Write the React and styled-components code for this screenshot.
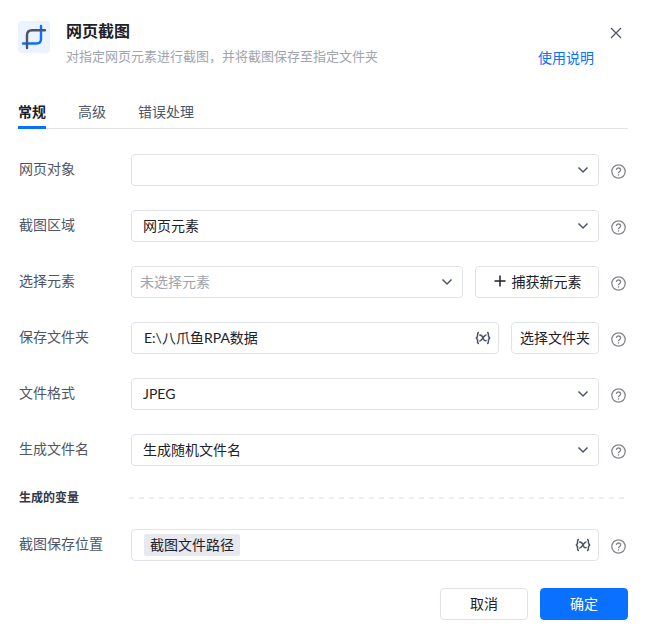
import React from "react";
import styled, { createGlobalStyle } from "styled-components";

const GlobalStyle = createGlobalStyle`
  * { box-sizing: border-box; }
  body {
    margin: 0;
    background: #ffffff;
    color: #1d2129;
  }
  body, button, input, select {
    font-family: Lato, "Noto Sans CJK SC", sans-serif;
    font-size: 14px;
  }
`;

const Dialog = styled.form`
  display: flex;
  flex-direction: column;
  padding: 20px 18px 18px;
`;

const Header = styled.header`
  display: flex;
  align-items: flex-start;
  gap: 16px;
`;

const AppIcon = styled.svg`
  flex: none;
  width: 32px;
  height: 32px;
  margin-top: 1px;
`;

const Heading = styled.div`
  flex: 1;
  min-width: 0;
`;

const Title = styled.h1`
  margin: 0;
  font-size: 16px;
  line-height: 22px;
  font-weight: 700;
`;

const Description = styled.p`
  margin: 3px 0 0;
  font-size: 13px;
  line-height: 22px;
  color: #a0a4ae;
`;

const HelpLink = styled.a`
  margin-top: 26px;
  line-height: 24px;
  color: #0a70ff;
  text-decoration: none;
`;

const CloseButton = styled.button`
  display: grid;
  place-items: center;
  width: 24px;
  height: 24px;
  margin-top: 1px;
  margin-left: -6px;
  padding: 0;
  border: 0;
  background: none;
  color: #4e5566;
`;

const TabList = styled.div`
  display: flex;
  gap: 32px;
  margin-top: 27px;
  border-bottom: 1px solid #e1e3ea;
`;

const Tab = styled.button`
  height: 32px;
  margin-bottom: -1px;
  padding: 1px 0 0;
  border: 0;
  border-bottom: 3px solid ${(p) => (p.$active ? "#0a70ff" : "transparent")};
  background: none;
  line-height: 28px;
  font-weight: ${(p) => (p.$active ? 700 : 400)};
  color: ${(p) => (p.$active ? "#1d2129" : "#4e5566")};
`;

const Fields = styled.div`
  display: flex;
  flex-direction: column;
  gap: 24px;
  padding-top: 25px;
`;

const Row = styled.div`
  display: grid;
  grid-template-columns: 100px minmax(0, 1fr) 17px;
  align-items: center;
  column-gap: 12px;
`;

const Label = styled.label`
  padding-left: 1px;
  line-height: 30px;
  align-self: start;
  color: #4e5566;
`;

const Controls = styled.div`
  display: flex;
  gap: 12px;
  padding-left: 1px;
`;

const Field = styled.div`
  display: grid;
  grid-template-columns: minmax(0, 1fr);
  align-items: center;
  flex: 1;
  min-width: 0;
  height: 32px;
  border: 1px solid #e1e3ea;
  border-radius: 4px;
  background: #ffffff;

  & > * { grid-row: 1; grid-column: 1; }
`;

const SelectBox = styled.select`
  appearance: none;
  width: 100%;
  height: 30px;
  padding: 0 32px 2px ${(p) => (p.$muted ? 8 : 11)}px;
  border: 0;
  border-radius: 4px;
  background: transparent;
  color: ${(p) => (p.$muted ? "#a0a4ae" : "#1d2129")};
`;

const TextBox = styled.input`
  width: 100%;
  height: 30px;
  padding: 0 32px 2px 12px;
  border: 0;
  border-radius: 4px;
  background: transparent;
  color: #1d2129;
`;

const Chevron = styled.svg`
  justify-self: end;
  width: 12px;
  height: 12px;
  margin-right: 9px;
  pointer-events: none;
`;

const VariableButton = styled.button`
  display: grid;
  place-items: center;
  justify-self: end;
  width: 16px;
  height: 16px;
  margin-right: 7px;
  padding: 0;
  border: 0;
  background: none;
  color: #4e5566;
`;

const Tag = styled.output`
  justify-self: start;
  margin-left: 12px;
  padding: 0 6px;
  border-radius: 2px;
  background: #e7e9ef;
  line-height: 22px;
`;

const Button = styled.button`
  display: flex;
  align-items: center;
  justify-content: center;
  gap: 5px;
  flex: none;
  width: ${(p) => (p.$wide ? 124 : 88)}px;
  height: 32px;
  padding: 0 0 2px;
  border: 1px solid ${(p) => (p.$primary ? "#0a70ff" : "#e1e3ea")};
  border-radius: 4px;
  background: ${(p) => (p.$primary ? "#0a70ff" : "#ffffff")};
  color: ${(p) => (p.$primary ? "#ffffff" : "#1d2129")};
`;

const HelpButton = styled.button`
  display: grid;
  place-items: center;
  width: 15px;
  height: 15px;
  margin-top: 3px;
  padding: 0;
  border: 0;
  background: none;
  color: #85878c;
`;

const Section = styled.div`
  display: grid;
  grid-template-columns: 99px minmax(0, 1fr);
  column-gap: 12px;
  align-items: center;
  padding: 22px 4px 21px 0;
`;

const SectionTitle = styled.h2`
  margin: 0;
  padding-left: 1px;
  font-size: 12px;
  line-height: 20px;
  font-weight: 700;
  color: #333844;
`;

const DashedLine = styled.div`
  height: 2px;
  background: repeating-linear-gradient(to right, #eceef2 0 5px, transparent 5px 10px);
`;

const Footer = styled.footer`
  display: flex;
  justify-content: flex-end;
  gap: 12px;
  padding-top: 27px;
`;

function Help() {
  return (
    <HelpButton type="button" aria-label="帮助">
      <svg width="15" height="15" viewBox="0 0 15 15" fill="none" stroke="currentColor" strokeWidth="1.3">
        <circle cx="7.5" cy="7.5" r="6.7" />
        <path d="M5.400 6.100C5.400 4.700 6.300 4 7.500 4s2.100.8 2.100 1.900c0 1.500-2.100 1.600-2.100 3.300" />
        <path d="M7.500 10.200v1.400" />
      </svg>
    </HelpButton>
  );
}

function Variable() {
  return (
    <VariableButton type="button" aria-label="插入变量">
      <svg width="16" height="16" viewBox="0 0 16 16" fill="none" stroke="currentColor" strokeWidth="1.500">
        <path d="M4 2.600C2.500 2.600 2.600 3.300 2.600 5s0 2.600-1.700 3c1.700.4 1.700 1.300 1.700 3s-.1 2.400 1.400 2.400" />
        <path d="M12 2.600c1.500 0 1.400.7 1.400 2.400s0 2.600 1.700 3c-1.700.4-1.700 1.300-1.700 3s.1 2.400-1.400 2.400" />
        <path d="M4.300 5.300c2.700-.9 3 .9 3.700 2.700s1.300 3.500 3.700 2.400M11.500 5.100C8.600 4.400 7.400 11.600 4.300 10.900" />
      </svg>
    </VariableButton>
  );
}

function Select({ id, value, muted }) {
  return (
    <Field>
      <SelectBox id={id} $muted={muted} defaultValue={value}>
        <option value={value}>{value}</option>
      </SelectBox>
      <Chevron viewBox="0 0 12 12" fill="none" stroke="#4e5566" strokeWidth="1.500" aria-hidden="true">
        <path d="M1.500 3.500L6 8l4.500-4.500" />
      </Chevron>
    </Field>
  );
}

function FormRow({ id, label, children }) {
  return (
    <Row>
      <Label htmlFor={id}>{label}</Label>
      <Controls>{children}</Controls>
      <Help />
    </Row>
  );
}

const tabs = ["常规", "高级", "错误处理"];

export default function App() {
  return (
    <>
      <GlobalStyle />
      <Dialog onSubmit={(e) => e.preventDefault()}>
        <Header>
          <AppIcon viewBox="0 0 32 32" fill="none" strokeWidth="2.400" strokeLinecap="round" aria-hidden="true">
            <rect width="32" height="32" rx="4" fill="#ebf3ff" />
            <path d="M23 5v13q0 4.500-4.500 4.500H5" stroke="#0a70ff" />
            <path d="M27 9.200H14q-5 0-5 5V27" stroke="#4e5566" />
          </AppIcon>
          <Heading>
            <Title>网页截图</Title>
            <Description>对指定网页元素进行截图，并将截图保存至指定文件夹</Description>
          </Heading>
          <HelpLink href="#help">使用说明</HelpLink>
          <CloseButton type="button" aria-label="关闭">
            <svg width="12" height="12" viewBox="0 0 12 12" stroke="currentColor" strokeWidth="1.300">
              <path d="M1 1l10 10M11 1L1 11" />
            </svg>
          </CloseButton>
        </Header>

        <TabList role="tablist">
          {tabs.map((name, i) => (
            <Tab key={name} type="button" role="tab" aria-selected={i === 0} $active={i === 0}>
              {name}
            </Tab>
          ))}
        </TabList>

        <Fields>
          <FormRow id="page" label="网页对象">
            <Select id="page" value="" />
          </FormRow>
          <FormRow id="area" label="截图区域">
            <Select id="area" value="网页元素" />
          </FormRow>
          <FormRow id="element" label="选择元素">
            <Select id="element" value="未选择元素" muted />
            <Button type="button" $wide>
              <svg width="14" height="14" viewBox="0 0 14 14" stroke="currentColor" strokeWidth="1.500" aria-hidden="true">
                <path d="M7 1.500v11M1.500 7h11" />
              </svg>
              捕获新元素
            </Button>
          </FormRow>
          <FormRow id="folder" label="保存文件夹">
            <Field>
              <TextBox id="folder" type="text" defaultValue={"E:\\八爪鱼RPA数据"} />
              <Variable />
            </Field>
            <Button type="button">选择文件夹</Button>
          </FormRow>
          <FormRow id="format" label="文件格式">
            <Select id="format" value="JPEG" />
          </FormRow>
          <FormRow id="filename" label="生成文件名">
            <Select id="filename" value="生成随机文件名" />
          </FormRow>
        </Fields>

        <Section>
          <SectionTitle>生成的变量</SectionTitle>
          <DashedLine />
        </Section>

        <FormRow id="result" label="截图保存位置">
          <Field>
            <Tag id="result">截图文件路径</Tag>
            <Variable />
          </Field>
        </FormRow>

        <Footer>
          <Button type="button">取消</Button>
          <Button type="submit" $primary>确定</Button>
        </Footer>
      </Dialog>
    </>
  );
}
